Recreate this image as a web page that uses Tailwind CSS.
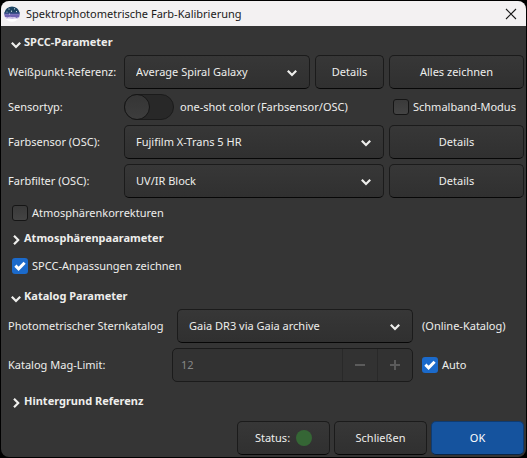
<!DOCTYPE html>
<html lang="de">
<head>
<meta charset="utf-8">
<meta name="viewport" content="width=device-width, initial-scale=1">
<title>Spektrophotometrische Farb-Kalibrierung</title>
<script src="https://cdn.jsdelivr.net/npm/@tailwindcss/browser@4"></script>
</head>
<body class="min-h-screen bg-black p-px font-['Noto_Sans','Open_Sans',sans-serif] text-[11px] leading-4 text-[#eeeeec]">
<svg class="hidden">
  <symbol id="down" viewBox="0 0 12 12"><path d="M1.8 3.8 6 8l4.2-4.2" fill="none" stroke="currentColor" stroke-width="2.2"/></symbol>
  <symbol id="right" viewBox="0 0 12 12"><path d="M4 1.8 8.2 6 4 10.2" fill="none" stroke="currentColor" stroke-width="2.2"/></symbol>
  <symbol id="tick" viewBox="0 0 16 16"><path d="M3.4 7.600 6.600 10.800l6-6" fill="none" stroke="#fff" stroke-width="3"/></symbol>
</svg>
<main class="flex min-h-[calc(100vh-2px)] flex-col overflow-hidden rounded-lg bg-[#353535]">
  <header class="flex h-[25px] items-center bg-[#f3f1f2] pr-[7px] pl-[3px] text-[#1a1a1a]">
    <svg class="size-4" viewBox="0 0 16 16" aria-hidden="true">
      <circle cx="8" cy="8" r="7.800" fill="#fff"/>
      <path d="M.3 7A7.800 7.800 0 0 1 15.700 7z" fill="#1d4462"/>
      <path d="M.3 6.500h15.400l.1 2H.2z" fill="#3d4f8c"/>
      <path d="M.2 8.300h15.600l-.6 3-2.700.7-2-.8-2.500.4L6 10.800l-2.500.9-2.600-.6z" fill="#7163b2"/>
      <path d="m1.200 11.500 2.500.2 2.300-.9 2.200.9 2.300-.4 2 .7 2.300-.5-1 1.300-3-.2-2.500.5-3-.6-3 .2z" fill="#c9bce4"/>
      <g fill="#e8f4fa"><circle cx="5" cy="3" r=".6"/><circle cx="10.500" cy="2.800" r=".6"/><circle cx="3" cy="6" r=".5"/><circle cx="7.500" cy="5.200" r=".6"/><circle cx="12.500" cy="5.600" r=".6"/><circle cx="5.500" cy="8" r=".5"/></g>
    </svg>
    <h1 class="ml-1.5 flex-1">Spektrophotometrische Farb-Kalibrierung</h1>
    <button aria-label="Schließen" class="grid size-4 place-items-center"><svg class="size-3" viewBox="0 0 12 12"><path d="m1 1 10 10M11 1 1 11" stroke="#1a1a1a" stroke-width="1.100"/></svg></button>
  </header>

  <form class="flex flex-1 flex-col pr-0.5 pb-0.5 pl-[7px]">
    <h2 class="flex h-[29px] items-center font-bold"><button type="button" aria-expanded="true" class="flex items-center gap-0.5 pl-0.5 pt-0.5"><svg class="mt-1.5 size-3"><use href="#down"/></svg>SPCC-Parameter</button></h2>
    <div class="grid grid-cols-[111px_1fr_69px_135px] items-center gap-[5px]">
      <label for="white" class="whitespace-nowrap">Weißpunkt-Referenz:</label>
      <div class="relative">
        <select id="white" class="h-[34px] w-full appearance-none rounded-[5px] border border-[#1b1b1b] border-b-[#070707] bg-linear-to-b from-[#373737] to-[#303030] pr-8 pl-[11px]"><option>Average Spiral Galaxy</option></select>
        <svg class="pointer-events-none absolute top-3 right-3 size-3"><use href="#down"/></svg>
      </div>
      <button type="button" class="h-[34px] rounded-[5px] border border-[#1b1b1b] border-b-[#070707] bg-linear-to-b from-[#373737] to-[#303030]">Details</button>
      <button type="button" class="h-[34px] rounded-[5px] border border-[#1b1b1b] border-b-[#070707] bg-linear-to-b from-[#373737] to-[#303030]">Alles zeichnen</button>

      <label for="sensor">Sensortyp:</label>
      <div class="col-span-2 flex items-center gap-1.5">
        <input id="sensor" type="checkbox" role="switch" class="h-[26px] w-[50px] shrink-0 appearance-none rounded-full border border-[#1b1b1b] bg-[#282828] before:block before:size-[26px] before:-m-px before:rounded-full before:border before:border-[#161616] before:bg-linear-to-b before:from-[#353535] before:to-[#3d3d3d]">
        <span class="whitespace-nowrap">one-shot color (Farbsensor/OSC)</span>
      </div>
      <label class="flex items-center gap-1 pl-1 whitespace-nowrap"><input type="checkbox" class="size-4 shrink-0 appearance-none rounded-[3px] border border-[#151515] bg-linear-to-b from-[#3a3a3a] to-[#444444]">Schmalband-Modus</label>

      <label for="osc">Farbsensor (OSC):</label>
      <div class="relative col-span-2">
        <select id="osc" class="h-[34px] w-full appearance-none rounded-[5px] border border-[#1b1b1b] border-b-[#070707] bg-linear-to-b from-[#373737] to-[#303030] pr-8 pl-[11px]"><option>Fujifilm X-Trans 5 HR</option></select>
        <svg class="pointer-events-none absolute top-3 right-3 size-3"><use href="#down"/></svg>
      </div>
      <button type="button" class="h-[34px] rounded-[5px] border border-[#1b1b1b] border-b-[#070707] bg-linear-to-b from-[#373737] to-[#303030]">Details</button>

      <label for="filter">Farbfilter (OSC):</label>
      <div class="relative col-span-2">
        <select id="filter" class="h-[34px] w-full appearance-none rounded-[5px] border border-[#1b1b1b] border-b-[#070707] bg-linear-to-b from-[#373737] to-[#303030] pr-8 pl-[11px]"><option>UV/IR Block</option></select>
        <svg class="pointer-events-none absolute top-3 right-3 size-3"><use href="#down"/></svg>
      </div>
      <button type="button" class="h-[34px] rounded-[5px] border border-[#1b1b1b] border-b-[#070707] bg-linear-to-b from-[#373737] to-[#303030]">Details</button>
    </div>

    <label class="mt-1 flex h-[22px] items-center gap-1 pl-1"><input type="checkbox" class="size-4 appearance-none rounded-[3px] border border-[#151515] bg-linear-to-b from-[#3a3a3a] to-[#444444]">Atmosphärenkorrekturen</label>
    <h2 class="flex h-[27px] items-center font-bold"><button type="button" aria-expanded="false" class="flex items-center gap-0.5 pl-0.5"><svg class="mt-1 size-3"><use href="#right"/></svg>Atmosphärenpaarameter</button></h2>
    <label class="flex h-[30px] items-center gap-1 pl-1"><span class="relative flex"><input type="checkbox" checked class="size-4 appearance-none rounded-[3px] bg-[#1b6acb]"><svg class="pointer-events-none absolute inset-0 size-4"><use href="#tick"/></svg></span>SPCC-Anpassungen zeichnen</label>
    <h2 class="flex h-[28px] items-center font-bold"><button type="button" aria-expanded="true" class="flex items-center gap-0.5 pl-0.5 pt-0.5"><svg class="mt-1.5 size-3"><use href="#down"/></svg>Katalog Parameter</button></h2>

    <div class="flex items-center gap-[9px]">
      <label for="catalog" class="w-40 whitespace-nowrap">Photometrischer Sternkatalog</label>
      <div class="relative flex-1">
        <select id="catalog" class="h-[34px] w-full appearance-none rounded-[5px] border border-[#1b1b1b] border-b-[#070707] bg-linear-to-b from-[#373737] to-[#303030] pr-8 pl-[11px]"><option>Gaia DR3 via Gaia archive</option></select>
        <svg class="pointer-events-none absolute top-3 right-3 size-3"><use href="#down"/></svg>
      </div>
      <span class="w-[102px] whitespace-nowrap">(Online-Katalog)</span>
    </div>
    <div class="mt-[5px] flex items-center gap-[9px]">
      <label for="mag" class="w-[155px]">Katalog Mag-Limit:</label>
      <div class="flex h-[34px] flex-1 overflow-hidden rounded-[5px] border border-[#1b1b1b] bg-[#323232] text-[#878786]">
        <input id="mag" type="text" inputmode="numeric" value="12" disabled class="min-w-0 flex-1 pl-2">
        <button type="button" disabled aria-label="Verringern" class="grid w-[35px] place-items-center border-l border-[#292929] text-[#5b5b5b]"><svg class="size-3" viewBox="0 0 12 12"><path d="M1 6h10" stroke="currentColor" stroke-width="2"/></svg></button>
        <button type="button" disabled aria-label="Erhöhen" class="grid w-[35px] place-items-center border-l border-[#292929] text-[#5b5b5b]"><svg class="size-3" viewBox="0 0 12 12"><path d="M1 6h10M6 1v10" stroke="currentColor" stroke-width="2"/></svg></button>
      </div>
      <label class="flex w-[102px] items-center gap-1"><span class="relative flex"><input type="checkbox" checked class="size-4 appearance-none rounded-[3px] bg-[#1b6acb]"><svg class="pointer-events-none absolute inset-0 size-4"><use href="#tick"/></svg></span>Auto</label>
    </div>
    <h2 class="flex h-[37px] items-center font-bold"><button type="button" aria-expanded="false" class="flex items-center gap-0.5 pl-0.5"><svg class="mt-1 size-3"><use href="#right"/></svg>Hintergrund Referenz</button></h2>

    <div class="mt-auto flex justify-end gap-1">
      <button type="button" class="flex h-[34px] w-[93px] items-center justify-center gap-1.5 rounded-[5px] border border-[#1b1b1b] border-b-[#070707] bg-linear-to-b from-[#373737] to-[#303030]">Status:<span class="size-4 rounded-full bg-[#356635]"></span></button>
      <button type="button" class="h-[34px] w-[93px] rounded-[5px] border border-[#1b1b1b] border-b-[#070707] bg-linear-to-b from-[#373737] to-[#303030]">Schließen</button>
      <button type="submit" class="h-[34px] w-[93px] rounded-[5px] border border-[#0f3b71] border-b-[#092444] bg-[#15539e] text-white">OK</button>
    </div>
  </form>
</main>
</body>
</html>
